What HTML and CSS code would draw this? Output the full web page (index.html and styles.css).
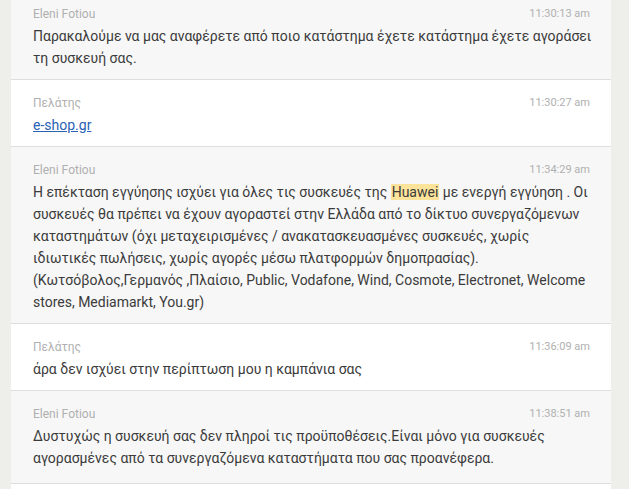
FILE: index.html
```html
<!DOCTYPE html>
<html lang="el">
<head>
  <meta charset="UTF-8">
  <title>Συνομιλία</title>
  <link rel="stylesheet" href="styles.css">
</head>
<body>
  <div class="chat">
    <div class="msg agent">
      <div class="msg-head">
        <span class="who">Eleni Fotiou</span>
        <span class="time">11:30:13 am</span>
      </div>
      <p class="text">Παρακαλούμε να μας αναφέρετε από ποιο κατάστημα έχετε κατάστημα έχετε αγοράσει τη συσκευή σας.</p>
    </div>

    <div class="msg client">
      <div class="msg-head">
        <span class="who">Πελάτης</span>
        <span class="time">11:30:27 am</span>
      </div>
      <p class="text"><a href="#">e-shop.gr</a></p>
    </div>

    <div class="msg agent">
      <div class="msg-head">
        <span class="who">Eleni Fotiou</span>
        <span class="time">11:34:29 am</span>
      </div>
      <p class="text">Η επέκταση εγγύησης ισχύει για όλες τις συσκευές της <mark>Huawei</mark> με ενεργή εγγύηση . Οι συσκευές θα πρέπει να έχουν αγοραστεί στην Ελλάδα από το δίκτυο συνεργαζόμενων καταστημάτων (όχι μεταχειρισμένες / ανακατασκευασμένες συσκευές, χωρίς ιδιωτικές πωλήσεις, χωρίς αγορές μέσω πλατφορμών δημοπρασίας).<br>(Κωτσόβολος,Γερμανός ,Πλαίσιο, Public, Vodafone, Wind, Cosmote, Electronet, Welcome stores, Mediamarkt, You.gr)</p>
    </div>

    <div class="msg client">
      <div class="msg-head">
        <span class="who">Πελάτης</span>
        <span class="time">11:36:09 am</span>
      </div>
      <p class="text">άρα δεν ισχύει στην περίπτωση μου η καμπάνια σας</p>
    </div>

    <div class="msg agent last">
      <div class="msg-head">
        <span class="who">Eleni Fotiou</span>
        <span class="time">11:38:51 am</span>
      </div>
      <p class="text">Δυστυχώς η συσκευή σας δεν πληροί τις προϋποθέσεις.Είναι μόνο για συσκευές αγορασμένες από τα συνεργαζόμενα καταστήματα που σας προανέφερα.</p>
    </div>
  </div>
</body>
</html>
```

FILE: styles.css
```css
body {
  margin: 0;
  background: #eeeeea;
  font-family: Roboto, "Noto Sans", sans-serif;
  overflow: hidden;
}
.chat {
  width: 600px;
  min-height: 520px;
  margin: -9px 0 0 11px;
  background: #fff;
}
.msg {
  padding: 15px 21px 10px 22px;
  border-bottom: 1px solid #dedede;
}
.msg.agent {
  background: #f7f7f7;
}
.msg.client {
  background: #fff;
}
.msg.last {
  padding-bottom: 14px;
}
.msg-head {
  display: flex;
  justify-content: space-between;
  font-size: 11px;
  line-height: 16px;
  color: #b0b0b0;
  margin-bottom: 3px;
}
.who {
  font-size: 12px;
}
.text {
  margin: 0 -3px 0 0;
  font-size: 14px;
  line-height: 22px;
  color: #3b3b3b;
}
.text a {
  color: #2a62b5;
}
mark {
  background: #fde49a;
  color: inherit;
  padding: 0 1px;
}
```
